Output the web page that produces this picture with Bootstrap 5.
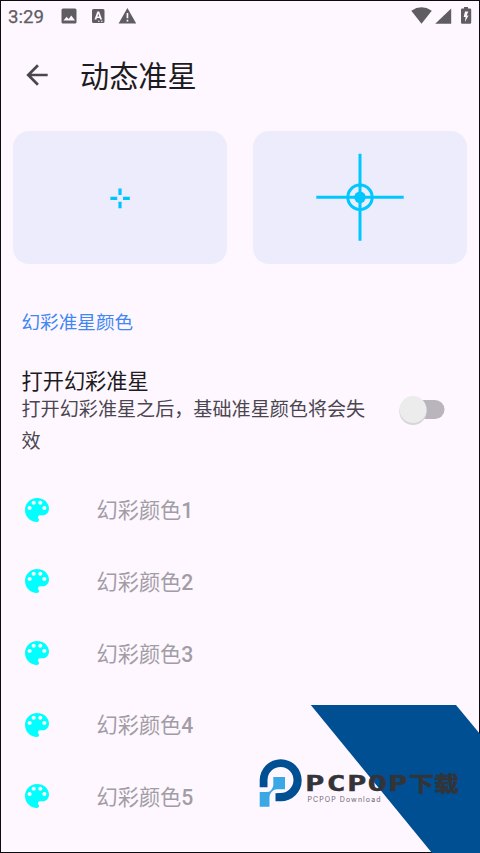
<!DOCTYPE html>
<html lang="zh-CN">
<head>
<meta charset="utf-8">
<meta name="viewport" content="width=device-width, initial-scale=1">
<title>动态准星</title>
<link href="https://cdn.jsdelivr.net/npm/bootstrap@5.3.0/dist/css/bootstrap.min.css" rel="stylesheet">
<style>
  body { font-family: Roboto, "Noto Sans CJK SC", sans-serif; background: #fef7ff; color: #1c1b20; }
  svg { display: block; }
  .phone { width: 480px; height: 853px; border: 1px solid #0d0b10; }
  .statusbar { height: 30px; padding: 0 7px; color: #605d62; }
  .clock { font-size: 18.7px; line-height: 30px; width: 52px; padding-top: 1px; -webkit-text-stroke: .25px #605d62; }
  .appbar { height: 87px; padding: 0 20px; }
  .page-title { font-size: 29.2px; line-height: 40px; margin: 5px 0 0 27px; font-weight: 400; }
  .previews { margin-top: 12.5px; padding: 0 12.5px 0 12px; gap: 26.5px; }
  .preview { flex: 1 1 0; height: 133.5px; border-radius: 16px; background: #ececfc; }
  .section-label { color: #3f88f3; font-size: 18.6px; line-height: 26px; margin: 46px 20.5px 0; }
  .setting { margin-top: 32px; padding: 0 34px 0 20.5px; }
  .setting-title { font-size: 21.2px; line-height: 28px; }
  .setting-note { font-size: 19.1px; line-height: 32px; color: #49464f; width: 346px; margin-top: -2px; }
  .toggle { width: 48px; height: 34px; margin-top: -6px; }
  .color-list { margin-top: 16px; }
  .color-row { height: 71.6px; padding-left: 20px; gap: 43.5px; color: #a29da5; font-size: 21.2px; }
  .color-name { padding-top: 3px; }
  .digit { font-weight: 500; }
  .watermark { left: 0; top: 0; pointer-events: none; }
</style>
</head>
<body>
<main class="phone position-relative overflow-hidden d-flex flex-column">
  <header>
    <div class="statusbar d-flex align-items-center justify-content-between">
      <div class="d-flex align-items-center">
        <span class="clock">3:29</span>
        <svg width="78" height="30" viewBox="60 1 78 30" fill="currentColor">
          <path fill-rule="evenodd" d="M63 8.500h12q1.500 0 1.500 1.500v12q0 1.500-1.500 1.500H63q-1.500 0-1.500-1.500V10q0-1.500 1.500-1.500zM63.500 20.500h11.500l-3.700-4.900-2.700 3.400-2-2.300z"/>
          <path fill-rule="evenodd" d="M93.500 9h9.500q1.500 0 1.500 1.500v11q0 1.500-1.500 1.500h-9.500q-1.500 0-1.500-1.500v-11q0-1.500 1.500-1.500zM97.300 11.500l-2.800 8h1.900l.5-1.600h2.800l.5 1.600h1.900l-2.900-8zM98.300 13.700l.9 2.700h-1.800zM98 20.700v1h1.500v-1zM101 20.700v1h1.500v-1z"/>
          <path fill-rule="evenodd" d="M127.400 8l8.800 15.500h-17.600zM126.600 13v5.200h1.700V13zM126.600 19.700v1.800h1.700v-1.800z"/>
        </svg>
      </div>
      <svg width="62" height="30" viewBox="410 1 62 30" fill="currentColor">
        <path d="M411.300 10.700Q421.500 4 431.800 10.700L421.500 23.800z"/>
        <path d="M435.200 23.800L451.200 8.500v15.300z"/>
        <path fill-rule="evenodd" d="M464 7h4v1.500h2q1.200 0 1.200 1.200v12.900q0 1.200-1.200 1.200h-7.800q-1.200 0-1.200-1.200V9.700q0-1.200 1.200-1.200h1.800zM465 11.500l-1.300 5.500h1.900l-.7 4.900 3.600-6.500h-1.800l1.600-3.900z"/>
      </svg>
    </div>
    <div class="appbar d-flex align-items-center">
      <svg width="32" height="32" viewBox="0 0 24 24" fill="#49464f"><path d="M20 11H7.830l5.590-5.590L12 4l-8 8 8 8 1.410-1.410L7.830 13H20z"/></svg>
      <h1 class="page-title">动态准星</h1>
    </div>
  </header>

  <section class="previews d-flex">
    <div class="preview d-flex align-items-center justify-content-center">
      <svg width="24" height="24" viewBox="108 185.300 24 24" stroke="#00c4ff" stroke-width="3.200"><path d="M120 188.800v6.600M120 202v6.600M110.400 198.700h6.800M123 198.700h6.800"/></svg>
    </div>
    <div class="preview d-flex align-items-center justify-content-center">
      <svg width="90" height="90" viewBox="315 152.300 90 90" fill="none" stroke="#00c8ff" stroke-width="3">
        <path d="M360 154v87M316.300 197.600h87.400"/>
        <circle cx="360" cy="197.600" r="12.200"/>
        <circle cx="360" cy="197.600" r="5.800" fill="#00c8ff" stroke="none"/>
      </svg>
    </div>
  </section>

  <div class="section-label">幻彩准星颜色</div>

  <section class="setting d-flex align-items-center justify-content-between">
    <div>
      <div class="setting-title">打开幻彩准星</div>
      <div class="setting-note">打开幻彩准星之后，基础准星颜色将会失效</div>
    </div>
    <svg class="toggle" viewBox="397 393 48 34" role="switch" aria-checked="false">
      <rect x="400" y="400" width="44.500" height="19" rx="9.500" fill="#bab4bc"/>
      <circle cx="413" cy="411.300" r="13.700" fill="#d9d3db"/>
      <circle cx="413" cy="409.500" r="13.500" fill="#ececec"/>
    </svg>
  </section>

  <svg class="d-none">
    <symbol id="palette" viewBox="0 0 24 24">
      <path fill="#fff" d="M5 7h14v5H5zM8 5h8v3H8z"/>
      <path fill="#00ffff" d="M12 3c-4.970 0-9 4.030-9 9s4.030 9 9 9c.83 0 1.500-.67 1.500-1.500 0-.39-.15-.74-.39-1.010-.23-.26-.38-.61-.38-.99 0-.83.67-1.500 1.500-1.500H16c2.760 0 5-2.240 5-5 0-4.420-4.030-8-9-8zm-5.500 9c-.83 0-1.500-.67-1.500-1.500S5.670 9 6.500 9 8 9.670 8 10.500 7.330 12 6.500 12zm3-4C8.670 8 8 7.330 8 6.500S8.670 5 9.500 5s1.500.67 1.500 1.500S10.330 8 9.500 8zm5 0c-.83 0-1.500-.67-1.500-1.500S13.670 5 14.500 5s1.500.67 1.500 1.500S15.330 8 14.500 8zm3 4c-.83 0-1.500-.67-1.500-1.500S16.670 9 17.500 9s1.500.67 1.500 1.500-.67 1.500-1.500 1.500z"/>
    </symbol>
  </svg>
  <ul class="color-list list-unstyled mb-0">
    <li class="color-row d-flex align-items-center"><svg width="32" height="32"><use href="#palette"/></svg><span class="color-name">幻彩颜色<span class="digit">1</span></span></li>
    <li class="color-row d-flex align-items-center"><svg width="32" height="32"><use href="#palette"/></svg><span class="color-name">幻彩颜色<span class="digit">2</span></span></li>
    <li class="color-row d-flex align-items-center"><svg width="32" height="32"><use href="#palette"/></svg><span class="color-name">幻彩颜色<span class="digit">3</span></span></li>
    <li class="color-row d-flex align-items-center"><svg width="32" height="32"><use href="#palette"/></svg><span class="color-name">幻彩颜色<span class="digit">4</span></span></li>
    <li class="color-row d-flex align-items-center"><svg width="32" height="32"><use href="#palette"/></svg><span class="color-name">幻彩颜色<span class="digit">5</span></span></li>
  </ul>
</main>

<svg class="watermark position-absolute" width="480" height="853" viewBox="0 0 480 853">
  <path fill="#004f92" d="M310.800 705H456l24 29v119H432z"/>
  <path fill="#004f92" d="M259.700 787.300V780a21 21 0 1 1 21 21.300h-5.200v-8.100l4.500-.2a13 13 0 1 0-12.500-13v7.300z"/>
  <path fill="#3aa8e4" d="M273.300 777h11.700v12.300h-8q-3 0-5 2.200l-1 1.200q-1.500 1.800-1.500 4v10.100h-9.800V792h7.300q2.500 0 3.700-1.500l1-1.300q1.600-1.700 1.600-4z"/>
  <g fill="#333438">
    <text transform="translate(0 790.500) scale(1.550 1)" x="196.900 210.700 224 237.200 250.500" y="0" font-family="DejaVu Sans Mono" font-weight="700" font-size="20.500" stroke="#333438" stroke-width=".5">PCPOP</text>
    <text x="409" y="791" font-family="Noto Sans CJK SC" font-weight="700" font-size="21" stroke="#333438" stroke-width=".5" textLength="50" lengthAdjust="spacingAndGlyphs">下载</text>
  </g>
  <text x="307.500" y="801.500" font-family="Inter" font-size="7" fill="#6b686e" textLength="73" lengthAdjust="spacing">PCPOP Download</text>
</svg>
<script src="https://cdn.jsdelivr.net/npm/bootstrap@5.3.0/dist/js/bootstrap.bundle.min.js"></script>
</body>
</html>
